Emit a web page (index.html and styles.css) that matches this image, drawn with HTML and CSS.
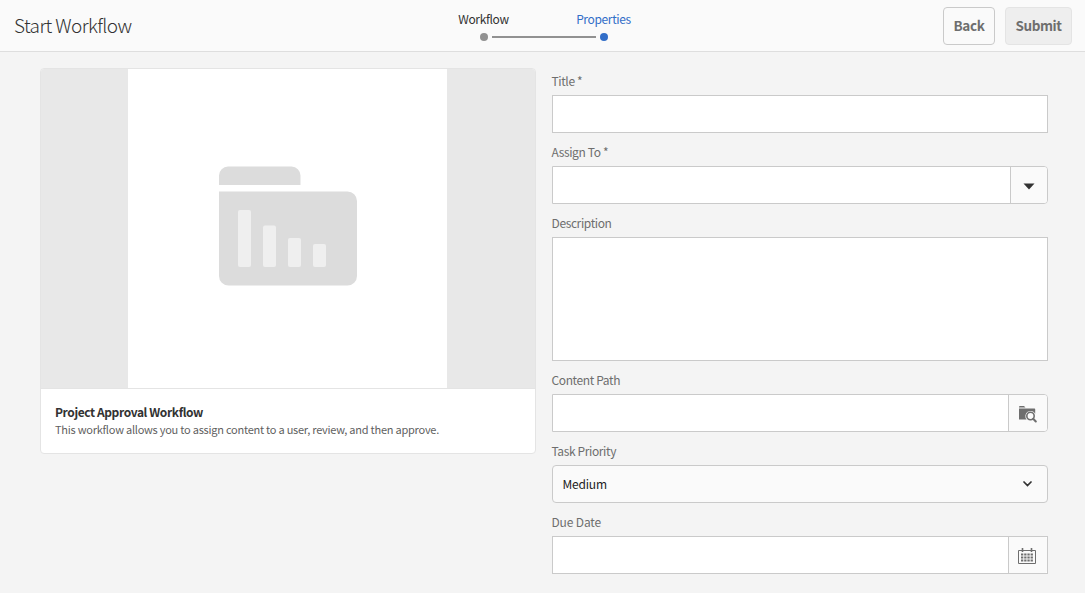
FILE: index.html
```html
<!DOCTYPE html>
<html lang="en">
<head>
<meta charset="utf-8">
<title>Start Workflow</title>
<link rel="stylesheet" href="styles.css">
</head>
<body>
<header class="bar">
  <h1 class="bar-title">Start Workflow</h1>
  <ol class="steps">
    <li class="step"><span class="step-label">Workflow</span><span class="dot"></span></li>
    <li class="step active"><span class="step-label">Properties</span><span class="dot"></span></li>
  </ol>
  <div class="actions">
    <button class="btn">Back</button>
    <button class="btn disabled" disabled>Submit</button>
  </div>
</header>
<main class="content">
  <article class="card">
    <div class="preview">
      <div class="thumb">
        <svg width="138" height="120" viewBox="0 0 138 120">
          <path fill="#dcdcdc" d="M0 19V9.500a9 9 0 0 1 9-9h63.500a9 9 0 0 1 9 9V19zM0 25.500h128.500a9.500 9.500 0 0 1 9.500 9.500v75a9.500 9.500 0 0 1-9.500 9.500H9.500A9.500 9.500 0 0 1 0 110z"/>
          <g fill="#efefef">
            <rect x="19" y="44" width="13" height="57" rx="2"/>
            <rect x="44" y="59.500" width="13" height="41.500" rx="2"/>
            <rect x="69" y="72" width="13" height="29" rx="2"/>
            <rect x="94" y="78" width="13" height="23" rx="2"/>
          </g>
        </svg>
      </div>
    </div>
    <div class="card-body">
      <h2>Project Approval Workflow</h2>
      <p>This workflow allows you to assign content to a user, review, and then approve.</p>
    </div>
  </article>
  <form class="form">
    <label class="label">Title *</label>
    <div class="field"></div>
    <label class="label">Assign To *</label>
    <div class="field rounded"><span class="addon narrow"><svg width="12" height="7" viewBox="0 0 12 7"><path fill="#323232" d="M.5.500h11L6 6.500z"/></svg></span></div>
    <label class="label">Description</label>
    <div class="field area"></div>
    <label class="label">Content Path</label>
    <div class="field rounded"><span class="addon browse">
      <svg width="18" height="18" viewBox="0 0 18 18"><path fill="#6e6e6e" d="M0 2q0-1 1-1h4l1.500 1.500H0zM0 3.500h15.500q.7 0 .7.700v4.600a5.200 5.200 0 1 0-8.600 5.700H0z"/><circle cx="11.500" cy="11" r="3.700" fill="none" stroke="#6e6e6e" stroke-width="1.600"/><path d="M14.200 13.800l2.600 2.700" stroke="#6e6e6e" stroke-width="2" stroke-linecap="round"/></svg>
    </span></div>
    <label class="label">Task Priority</label>
    <div class="field select rounded"><span class="value">Medium</span><svg width="9" height="6" viewBox="0 0 9 6"><path d="M1 1l3.500 3.500L8 1" fill="none" stroke="#323232" stroke-width="1.700" stroke-linecap="round"/></svg></div>
    <label class="label date-label">Due Date</label>
    <div class="field"><span class="addon date">
      <svg width="18" height="17" viewBox="0 0 18 17"><path fill="none" stroke="#6e6e6e" d="M.5 2.500h17v13H.5z"/><path fill="none" stroke="#6e6e6e" stroke-width="1.600" d="M4.500 0v4M13.500 0v4"/><path fill="none" stroke="#6e6e6e" stroke-width="1.800" stroke-dasharray="2.300 .9" d="M3 6.500h12M3 9.500h12M3 12.500h12"/></svg>
    </span></div>
  </form>
</main>
</body>
</html>
```
FILE: styles.css
```css
* { box-sizing: border-box; }
body {
  margin: 0;
  height: 593px;
  overflow: hidden;
  background: #f4f4f4;
  color: #323232;
  font-family: "Noto Sans CJK JP", "Noto Sans", sans-serif;
  font-size: 12px;
}
.bar {
  display: grid;
  grid-template-columns: 1fr 240px 1fr;
  height: 52px;
  padding: 0 13px 0 15px;
  background: #fafafa;
  border-bottom: 1px solid #dedede;
}
.bar-title {
  margin: 0 0 0 -1px;
  font-size: 19px;
  font-weight: 300;
  line-height: 50px;
  letter-spacing: -0.6px;
}
.steps {
  display: flex;
  margin: 0;
  padding: 9px 0 0;
  list-style: none;
}
.step {
  position: relative;
  display: flex;
  flex-direction: column;
  align-items: center;
  width: 120px;
}
.step-label {
  line-height: 19px;
  letter-spacing: -0.35px;
}
.dot {
  width: 8px;
  height: 8px;
  margin-top: 5px;
  border-radius: 50%;
  background: #919191;
}
.active { color: #326ec8; }
.active .dot { background: #326ec8; }
.active::before {
  content: "";
  position: absolute;
  top: 27px;
  left: -52px;
  width: 104px;
  height: 2px;
  background: #919191;
}
.actions {
  display: flex;
  justify-content: flex-end;
  gap: 10px;
  padding-top: 7px;
}
.btn {
  width: 52px;
  height: 38px;
  padding: 0 0 2px;
  border: 1px solid #cacaca;
  border-radius: 4px;
  background: #fafafa;
  color: #6e6e6e;
  font: 700 13.500px/34px "Noto Sans CJK JP", "Noto Sans", sans-serif;
  letter-spacing: -0.4px;
}
.btn.disabled {
  width: 67px;
  border-color: #e4e4e4;
  background: #eeeeee;
}
.content {
  display: grid;
  grid-template-columns: 496px 496px;
  gap: 16px;
  align-items: start;
  padding: 9px 37px 0 40px;
}
.card {
  height: 386px;
  margin-top: 7px;
  overflow: hidden;
  border: 1px solid #e4e4e4;
  border-radius: 4px;
  background: #fff;
}
.preview {
  height: 320px;
  padding-left: 87px;
  border-bottom: 1px solid #e4e4e4;
  background: #e8e8e8;
}
.thumb {
  width: 319px;
  height: 319px;
  padding: 97px 0 0 91px;
  background: #fff;
}
.thumb svg { display: block; }
.card-body { padding: 13px 14px; }
.card-body h2 {
  margin: 0;
  font-size: 12px;
  font-weight: 700;
  line-height: 19px;
  letter-spacing: -0.4px;
}
.card-body p {
  margin: 0;
  color: #5f5f5f;
  font-size: 11px;
  line-height: 17px;
  letter-spacing: -0.24px;
}
.form {
  display: flex;
  flex-direction: column;
}
.label {
  height: 33px;
  margin-left: -0.5px;
  padding-top: 9px;
  color: #6e6e6e;
  line-height: 19px;
  letter-spacing: -0.38px;
}
.label:first-child {
  height: 34px;
  padding-top: 10px;
}
.date-label { letter-spacing: -0.15px; }
.field {
  display: flex;
  justify-content: flex-end;
  height: 38px;
  border: 1px solid #cacaca;
  background: #fff;
}
.area { height: 124px; }
.rounded { border-radius: 0 4px 4px 0; }
.addon {
  display: flex;
  align-items: center;
  justify-content: center;
  width: 39px;
  border-left: 1px solid #cacaca;
  border-radius: 0 3px 3px 0;
  background: #fafafa;
}
.narrow { width: 37px; padding: 3px 1px 0 0; }
.browse { padding: 2px 1px 0 0; }
.date { padding: 3px 2px 0 0; }
.select {
  align-items: center;
  justify-content: space-between;
  padding: 0 15px 0 9.500px;
  border-radius: 4px;
  background: #fafafa;
}
.value {
  padding-bottom: 1px;
  color: #222;
  letter-spacing: -0.2px;
}
```
